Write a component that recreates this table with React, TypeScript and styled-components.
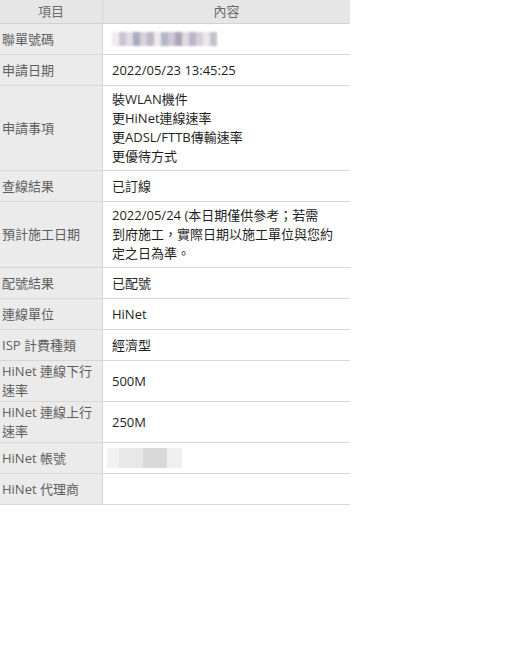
import React from 'react'
import styled, { createGlobalStyle } from 'styled-components'

type Row = {
  label: string
  value?: React.ReactNode
  tight?: boolean
}

const GlobalStyle = createGlobalStyle`
  body {
    margin: 0;
    background: #fff;
    font-family: "Open Sans", "Noto Sans CJK TC", sans-serif;
    font-size: 13px;
  }
`

const Table = styled.table`
  width: 350px;
  border-collapse: separate;
  border-spacing: 0;
  table-layout: fixed;
  font-size: 13px;
  line-height: 19px;
`

const HeadCell = styled.th<{ $left?: boolean }>`
  height: 24px;
  padding: 0;
  width: ${(p) => (p.$left ? '103px' : 'auto')};
  box-sizing: border-box;
  background: #e6e6e6;
  color: #6b6b6b;
  font-weight: normal;
  text-align: center;
  border-bottom: 1px solid #d2d2d2;
  border-right: ${(p) => (p.$left ? '1px solid #d8d8d8' : 'none')};
`

const LabelCell = styled.td<{ $tight?: boolean }>`
  height: 22px;
  padding: ${(p) => (p.$tight ? '1px 2px' : '4px 2px')};
  background: #ebebeb;
  color: #5e5e5e;
  vertical-align: middle;
  border-bottom: 1px solid #d6d6d6;
  border-right: 1px solid #d8d8d8;
`

const ValueCell = styled.td`
  height: 22px;
  padding: 4px 4px 4px 9px;
  color: #1f1f1f;
  vertical-align: middle;
  border-bottom: 1px solid #d6d6d6;
`

const Redacted = styled.div<{ $flat?: boolean }>`
  display: flex;
  height: ${(p) => (p.$flat ? '20px' : '14px')};
  margin-left: ${(p) => (p.$flat ? '-5px' : '0')};
  filter: ${(p) => (p.$flat ? 'none' : 'blur(1px)')};
  opacity: ${(p) => (p.$flat ? 1 : 0.75)};
`

const Pixel = styled.span`
  display: block;
  height: 100%;
`

const idBlur = ['#e9e6ec', '#b9b2c6', '#d6d0dc', '#8c93a8', '#c9c4d2', '#a8a2b8', '#e6e3ea', '#9aa0b6', '#bdb6c8', '#8f8aa2', '#d3cfd9', '#a69fb6', '#c7c2cf', '#e4e0e8', '#b3adbf']
const accountBlur = [
  { w: 12, c: '#f1f1f1' },
  { w: 24, c: '#e8e8e8' },
  { w: 24, c: '#d9d9d9' },
  { w: 15, c: '#efefef' },
]

const rows: Row[] = [
  {
    label: '聯單號碼',
    value: (
      <Redacted>
        {idBlur.map((c, i) => (
          <Pixel key={i} style={{ background: c, width: 7 }} />
        ))}
      </Redacted>
    ),
  },
  { label: '申請日期', value: '2022/05/23 13:45:25' },
  {
    label: '申請事項',
    value: (
      <>
        裝WLAN機件<br />
        更HiNet連線速率<br />
        更ADSL/FTTB傳輸速率<br />
        更優待方式
      </>
    ),
  },
  { label: '查線結果', value: '已訂線' },
  {
    label: '預計施工日期',
    value: (
      <>
        2022/05/24 (本日期僅供參考；若需<br />
        到府施工，實際日期以施工單位與您約<br />
        定之日為準。
      </>
    ),
  },
  { label: '配號結果', value: '已配號' },
  { label: '連線單位', value: 'HiNet' },
  { label: 'ISP 計費種類', value: '經濟型' },
  { label: 'HiNet 連線下行速率', value: '500M', tight: true },
  { label: 'HiNet 連線上行速率', value: '250M', tight: true },
  {
    label: 'HiNet 帳號',
    value: (
      <Redacted $flat>
        {accountBlur.map((b, i) => (
          <Pixel key={i} style={{ background: b.c, width: b.w }} />
        ))}
      </Redacted>
    ),
  },
  { label: 'HiNet 代理商' },
]

const App = () => {
  return (
    <>
      <GlobalStyle />
      <Table>
        <thead>
          <tr>
            <HeadCell $left>項目</HeadCell>
            <HeadCell>內容</HeadCell>
          </tr>
        </thead>
        <tbody>
          {rows.map((row) => (
            <tr key={row.label}>
              <LabelCell $tight={row.tight}>{row.label}</LabelCell>
              <ValueCell>{row.value}</ValueCell>
            </tr>
          ))}
        </tbody>
      </Table>
    </>
  )
}

export default App
